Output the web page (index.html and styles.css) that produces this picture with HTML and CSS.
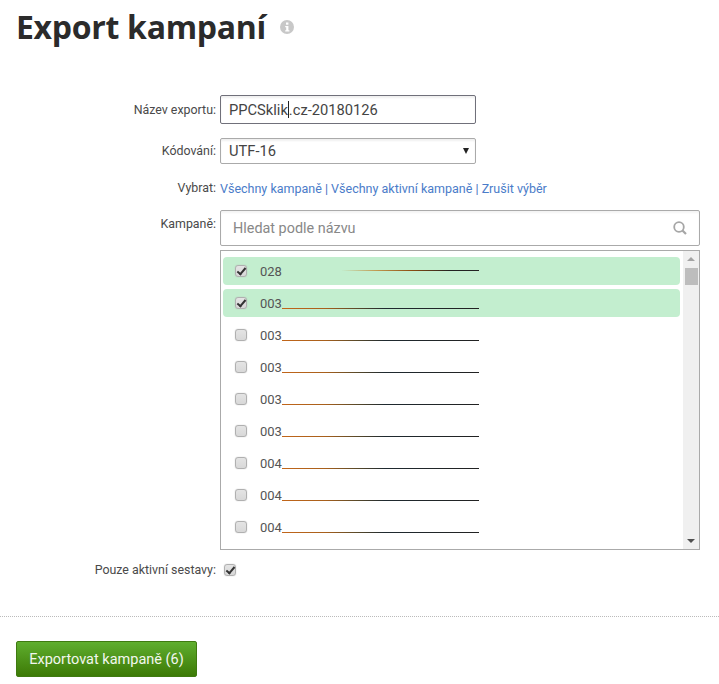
FILE: index.html

```html
<!DOCTYPE html>
<html lang="cs">
<head>
    <meta charset="UTF-8">
    <meta name="viewport" content="width=device-width, initial-scale=1.0">
    <title>Export kampaní</title>
    <link rel="stylesheet" href="styles.css">
</head>
<body>
    <div class="page-title">
        <h1>Export kampaní</h1>
        <svg class="info-icon" width="14" height="14" viewBox="0 0 14 14">
            <circle cx="7" cy="7" r="7" fill="#c8c8c8"/>
            <rect x="6" y="2.5" width="2.4" height="2.2" fill="#fff"/>
            <path d="M5.2 6h3.2v4.2h1v1.2H5.2v-1.2h1V7.2h-1z" fill="#fff"/>
        </svg>
    </div>

    <form class="export-form">
        <div class="form-row row-name">
            <label class="form-label">Název exportu:</label>
            <div class="text-input"><span>PPCSklik</span><span class="caret"></span><span>.cz-20180126</span></div>
        </div>
        <div class="form-row row-encoding">
            <label class="form-label">Kódování:</label>
            <div class="select-input"><span>UTF-16</span><span class="select-arrow"></span></div>
        </div>
        <div class="form-row row-select">
            <label class="form-label">Vybrat:</label>
            <div class="select-links">
                <a href="#">Všechny kampaně</a> | <a href="#">Všechny aktivní kampaně</a> | <a href="#">Zrušit výběr</a>
            </div>
        </div>
        <div class="form-row row-campaigns">
            <label class="form-label">Kampaně:</label>
            <div class="campaigns">
                <div class="search-box">
                    <span>Hledat podle názvu</span>
                    <svg width="14" height="14" viewBox="0 0 14 14" fill="none" stroke="#a6a6a6">
                        <circle cx="6" cy="6" r="4.8" stroke-width="1.8"/>
                        <path d="M9.5 9.5l3.5 3.5" stroke-width="2.2"/>
                    </svg>
                </div>
                <div class="campaign-list">
                    <div class="rows">
                        <div class="campaign selected">
                            <span class="check checked"></span><span class="code">028</span><span class="name-line faded"></span>
                        </div>
                        <div class="campaign selected">
                            <span class="check checked"></span><span class="code">003</span><span class="name-line"></span>
                        </div>
                        <div class="campaign">
                            <span class="check"></span><span class="code">003</span><span class="name-line"></span>
                        </div>
                        <div class="campaign">
                            <span class="check"></span><span class="code">003</span><span class="name-line"></span>
                        </div>
                        <div class="campaign">
                            <span class="check"></span><span class="code">003</span><span class="name-line"></span>
                        </div>
                        <div class="campaign">
                            <span class="check"></span><span class="code">003</span><span class="name-line"></span>
                        </div>
                        <div class="campaign">
                            <span class="check"></span><span class="code">004</span><span class="name-line"></span>
                        </div>
                        <div class="campaign">
                            <span class="check"></span><span class="code">004</span><span class="name-line"></span>
                        </div>
                        <div class="campaign">
                            <span class="check"></span><span class="code">004</span><span class="name-line"></span>
                        </div>
                    </div>
                    <div class="scrollbar">
                        <span class="arrow-up"></span>
                        <span class="thumb"></span>
                        <span class="arrow-down"></span>
                    </div>
                </div>
            </div>
        </div>
        <div class="form-row row-active">
            <label class="form-label">Pouze aktivní sestavy:</label>
            <span class="check checked"></span>
        </div>
    </form>

    <div class="form-footer">
        <button class="export-btn" type="button">Exportovat kampaně (6)</button>
    </div>
</body>
</html>
```

FILE: styles.css

```css
body {
    margin: 0;
    font-family: Roboto, 'Liberation Sans', sans-serif;
    font-size: 12.4px;
    color: #444;
    background: #fff;
}
.page-title {
    display: flex;
    align-items: center;
    gap: 14px;
    padding: 6px 16px 0;
    height: 41px;
}
h1 {
    margin: 0;
    font-family: 'Open Sans', sans-serif;
    font-size: 32px;
    line-height: 39px;
    font-weight: 700;
    color: #2b2b2b;
    letter-spacing: -0.3px;
}
.info-icon {
    margin-top: 1px;
}
.export-form {
    display: flex;
    flex-direction: column;
    padding-top: 48px;
}
.form-row {
    display: flex;
    gap: 4px;
}
.form-label {
    flex: 0 0 216px;
    text-align: right;
    line-height: 14px;
    color: #4a4a4a;
}
.row-name {
    align-items: center;
    height: 29px;
}
.text-input {
    display: flex;
    align-items: center;
    box-sizing: border-box;
    width: 256px;
    height: 29px;
    padding-left: 8px;
    border: 1px solid #70707a;
    border-radius: 2px;
    font-size: 14.7px;
    color: #444;
    box-shadow: inset 0 2px 2px #f0f0f0;
}
.caret {
    width: 1px;
    height: 17px;
    background: #222;
}
.row-encoding {
    align-items: center;
    height: 26px;
    margin-top: 14px;
}
.select-input {
    display: flex;
    align-items: center;
    justify-content: space-between;
    box-sizing: border-box;
    width: 256px;
    height: 26px;
    padding: 0 6px 0 8px;
    border: 1px solid #aaa;
    border-radius: 2px;
    font-size: 14.7px;
    box-shadow: inset 0 2px 2px #f0f0f0;
}
.select-arrow {
    border-left: 3px solid transparent;
    border-right: 3px solid transparent;
    border-top: 6px solid #222;
}
.row-select {
    margin-top: 16px;
    height: 28px;
    line-height: 16px;
}
.row-select .form-label {
    padding-top: 1px;
}
.select-links {
    padding-top: 1px;
    font-size: 12.5px;
    color: #4a6fc0;
}
.select-links a {
    color: #4a7cc9;
    text-decoration: none;
}
.row-campaigns {
    margin-top: 2px;
}
.row-campaigns .form-label {
    padding-top: 7px;
}
.campaigns {
    display: flex;
    flex-direction: column;
    gap: 4px;
    width: 480px;
}
.search-box {
    display: flex;
    align-items: center;
    justify-content: space-between;
    box-sizing: border-box;
    height: 36px;
    padding: 0 12px;
    border: 1px solid #aaa;
    border-radius: 2px;
    font-size: 14.4px;
    color: #888;
    box-shadow: inset 0 2px 2px #f4f4f4;
}
.campaign-list {
    display: flex;
    box-sizing: border-box;
    height: 300px;
    border: 1px solid #aaa;
    overflow: hidden;
}
.rows {
    flex: 1;
    display: flex;
    flex-direction: column;
    gap: 4px;
    padding: 6px 3px 0 2px;
}
.campaign {
    flex: 0 0 28px;
    display: flex;
    align-items: center;
    padding-left: 12px;
    border-radius: 4px;
    font-size: 13px;
    color: #555;
}
.campaign.selected {
    background: #c3eecf;
}
.code {
    margin-left: 13px;
    width: 22px;
}
.name-line {
    width: 197px;
    height: 1px;
    margin-top: 10px;
    background: linear-gradient(90deg, #c2661a, #a8601c 22%, #5a4a2a 38%, #1f2a30 52%, #222);
}
.name-line.faded {
    margin-top: -1px;
    background: linear-gradient(90deg, #c3eecf 30%, #c09a50 48%, #8a4c10 66%, #222 85%);
}
.check {
    position: relative;
    display: inline-block;
    box-sizing: border-box;
    flex: 0 0 12px;
    width: 12px;
    height: 12px;
    border: 1px solid #b0b0b0;
    border-radius: 3px;
    background: linear-gradient(#e4e4e4, #d8d8d8);
    box-shadow: 0 0 1px #aaa;
}
.check.checked::after {
    content: "";
    position: absolute;
    left: 3px;
    top: 0;
    width: 3px;
    height: 7px;
    border: solid #333;
    border-width: 0 2px 2px 0;
    transform: rotate(40deg);
}
.scrollbar {
    flex: 0 0 16px;
    display: flex;
    flex-direction: column;
    align-items: center;
    background: #f0f0f0;
}
.arrow-up {
    margin-top: 6px;
    border-left: 4px solid transparent;
    border-right: 4px solid transparent;
    border-bottom: 4px solid #a3a3a3;
}
.thumb {
    width: 13px;
    height: 17px;
    margin-top: 7px;
    background: #bdbdbd;
}
.arrow-down {
    margin-top: auto;
    margin-bottom: 6px;
    border-left: 4px solid transparent;
    border-right: 4px solid transparent;
    border-top: 4px solid #505050;
}
.row-active {
    align-items: center;
    margin-top: 13px;
    height: 14px;
}
.row-active .check {
    margin-left: 4px;
}
.form-footer {
    margin-top: 39px;
    padding: 24px 16px 0;
    border-top: 1px dotted #bbb;
}
.export-btn {
    display: block;
    width: 181px;
    height: 36px;
    padding: 0;
    border: 1px solid #3f7a10;
    border-radius: 2px;
    background: linear-gradient(#5fae2e, #3d7a06);
    color: #f2f7ee;
    font-family: Roboto, sans-serif;
    font-size: 14.5px;
}
```
